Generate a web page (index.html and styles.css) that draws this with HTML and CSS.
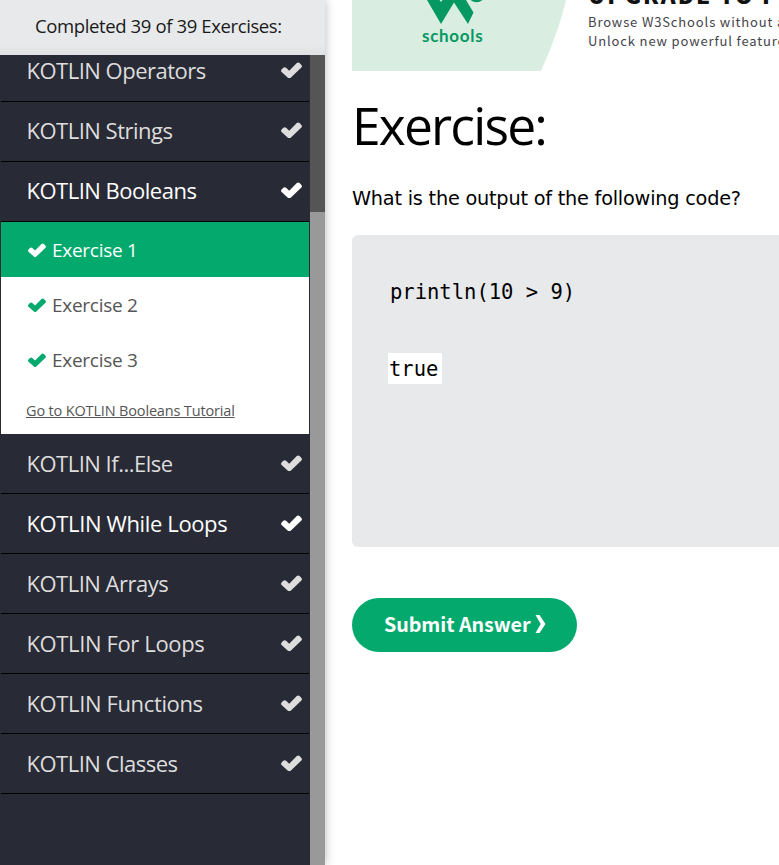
FILE: index.html
```
<!DOCTYPE html>
<html lang="en">
<head>
<meta charset="utf-8">
<title>Kotlin Exercises</title>
<link rel="stylesheet" href="styles.css">
</head>
<body>
<svg class="defs" width="0" height="0"><symbol id="check" viewBox="0 0 21 16"><path d="M.6 7.500 2.300 5.800Q3.700 4.500 5.100 5.800L8.200 8.700 15.800 1.100Q17.200-.2 18.600 1.100L20.400 2.900Q21.500 4.200 20.400 5.500L9.700 15.700Q8.300 16.900 6.900 15.700L.6 10.100Q-.5 8.800.6 7.500Z"/></symbol></svg>
<div class="page">
  <aside class="sidebar">
    <header class="progress"><span class="completed">Completed 39 of 39 Exercises:</span></header>
    <div class="panel">
      <nav class="topics">
        <a class="topic first"><span>KOTLIN Operators</span><svg><use href="#check"/></svg></a>
        <a class="topic raised"><span>KOTLIN Strings</span><svg><use href="#check"/></svg></a>
        <a class="topic raised bright"><span>KOTLIN Booleans</span><svg><use href="#check"/></svg></a>
        <div class="exercises">
          <a class="exercise active"><svg><use href="#check"/></svg><span>Exercise 1</span></a>
          <a class="exercise"><svg><use href="#check"/></svg><span>Exercise 2</span></a>
          <a class="exercise"><svg><use href="#check"/></svg><span>Exercise 3</span></a>
          <a class="tutorial">Go to KOTLIN Booleans Tutorial</a>
        </div>
        <a class="topic"><span>KOTLIN If...Else</span><svg><use href="#check"/></svg></a>
        <a class="topic bright loose"><span>KOTLIN While Loops</span><svg><use href="#check"/></svg></a>
        <a class="topic"><span>KOTLIN Arrays</span><svg><use href="#check"/></svg></a>
        <a class="topic loose"><span>KOTLIN For Loops</span><svg><use href="#check"/></svg></a>
        <a class="topic loose"><span>KOTLIN Functions</span><svg><use href="#check"/></svg></a>
        <a class="topic"><span>KOTLIN Classes</span><svg><use href="#check"/></svg></a>
      </nav>
      <div class="scrollbar"><div class="thumb"></div></div>
    </div>
  </aside>
  <main class="content">
    <div class="banner">
      <div class="brand">
        <svg class="brand-bg" viewBox="0 0 216 71"><path d="M0 0H214Q207 31 189 71H0Z" fill="#d9eee1"/><path d="M75 0H87.500L89 2 90.500 0H114L121.500 12.500 116 24 102 2.500 89 24Z" fill="#059862"/><path d="M118.500 0Q124.500 4.500 130.500 0" fill="#059862"/></svg>
        <span class="schools">schools</span>
      </div>
      <div class="pitch">
        <strong>UPGRADE TO PRO</strong>
        <span>Browse W3Schools without ads</span>
        <span>Unlock new powerful features</span>
      </div>
    </div>
    <h1>Exercise:</h1>
    <p class="question">What is the output of the following code?</p>
    <div class="code"><pre>println(10 &gt; 9)</pre><span class="answer">true</span></div>
    <button class="submit"><span>Submit Answer</span><svg width="11" height="18" viewBox="0 0 11 18"><path d="M.5 0H4.500L10.500 9 4.500 18H.5L5.700 9Z" fill="#fff"/></svg></button>
  </main>
</div>
</body>
</html>
```
FILE: styles.css
```
* { box-sizing: border-box; }
body { margin: 0; overflow: hidden; background: #fff; font-family: "Open Sans", sans-serif; color: #000; }
.defs { display: block; }
.page { display: flex; width: 779px; height: 865px; overflow: hidden; }
.sidebar { flex: 0 0 325px; display: flex; flex-direction: column; background: #e7e9eb; box-shadow: 0 0 10px rgba(0,0,0,.28); }
.progress { height: 55px; flex: none; padding-left: 35px; line-height: 51px; font-size: 18.500px; white-space: nowrap; background: linear-gradient(#e7e9eb 44px, #dfe1e3); color: #1a1a1a; }
.completed { letter-spacing: -.38px; }
.panel { flex: 1; display: flex; min-height: 0; background: #282a35; }
.topics { width: 310px; padding: 0 1px; overflow: hidden; }
.topic { height: 60px; display: flex; align-items: center; justify-content: space-between; padding: 0 7px 2px 25.500px; border-bottom: 1px solid #000; color: #ddd; font-size: 22px; letter-spacing: -.5px; white-space: nowrap; }
.topic.loose { letter-spacing: -.37px; }
.topic.first { margin-top: -13px; }
.topic.first, .topic.raised { padding-bottom: 4px; }
.topic.bright { color: #fff; }
.topic svg { width: 21px; height: 16px; fill: currentColor; }
.topic.first svg, .topic.raised svg { margin-top: 1px; }
.exercises { height: 212px; background: #fff; }
.exercise { height: 55px; display: flex; align-items: center; gap: 6px; padding: 0 0 0 27px; color: #555; font-size: 19px; letter-spacing: -.28px; }
.exercise svg { width: 18px; height: 14px; fill: #04aa6d; }
.exercise.active { background: #04aa6d; color: #fff; }
.exercise.active svg { fill: #fff; }
.tutorial { display: block; padding: 0 25px; line-height: 47px; font-size: 14.500px; letter-spacing: -.16px; color: #555; text-decoration: underline; white-space: nowrap; }
.scrollbar { width: 15px; background: #999; }
.thumb { height: 157px; background: #555; }
.content { flex: 0 0 500px; padding-left: 27px; }
.banner { height: 71px; display: flex; overflow: hidden; font-family: "Noto Sans CJK SC", sans-serif; }
.brand { width: 236px; flex: none; display: grid; }
.brand-bg { grid-area: 1 / 1; width: 216px; height: 71px; }
.schools { grid-area: 1 / 1; padding: 25px 0 0 70px; font: 700 17px/22px "Lato", sans-serif; letter-spacing: .7px; color: #059862; }
.pitch { display: flex; flex-direction: column; white-space: nowrap; margin-top: -20px; font-size: 13px; font-weight: 400; letter-spacing: .86px; color: #44444c; line-height: 19px; }
.pitch strong { font-size: 22.500px; font-weight: 900; line-height: 26px; height: 32px; padding-top: 1px; letter-spacing: 2px; color: #111; }
h1 { margin: 17px 0 0; height: 77px; font-size: 51.500px; line-height: 74px; font-weight: 400; letter-spacing: -1.800px; }
.question { margin: 21px 0 0; height: 25px; line-height: 25px; font-family: "DejaVu Sans", sans-serif; font-size: 19.300px; letter-spacing: -.22px; white-space: nowrap; }
.code { margin-top: 24px; height: 312px; padding: 41px 37px 41px 38px; background: #e7e9eb; border-radius: 6px; font: 20.500px/32px "DejaVu Sans Mono", monospace; }
.code pre { margin: 0; font: inherit; }
.answer { display: block; width: 54px; height: 31px; margin: 45px 0 0 -2px; padding-left: 1px; background: #fff; }
.submit { display: flex; align-items: center; gap: 5px; width: 225px; height: 54px; margin-top: 51px; padding: 0 0 4px 32px; border: 0; border-radius: 27px; background: #04aa6d; color: #fff; font: 700 19.700px "Noto Sans CJK SC", sans-serif; letter-spacing: -.05px; white-space: nowrap; }
.submit svg { margin-top: 2px; }
```
